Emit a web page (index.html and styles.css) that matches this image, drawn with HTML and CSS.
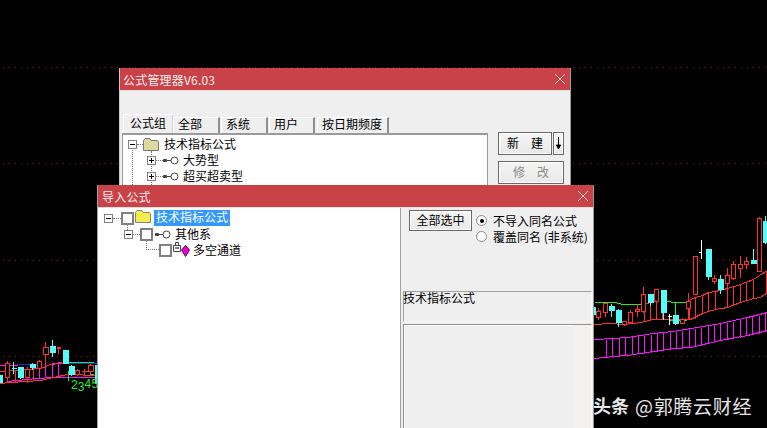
FILE: index.html
```html
<!DOCTYPE html>
<html lang="zh">
<head>
    <meta charset="UTF-8">
    <title>公式管理器</title>
    <link rel="stylesheet" href="styles.css">
</head>
<body>
    <!-- K线背景 -->
    <svg class="chart" width="767" height="428" viewBox="0 0 767 428">
        <g class="grid">
            <path d="M3 67H767M3 163H767M3 260H767M3 356H767"/>
        </g>
        <g transform="translate(.5 .5)" fill="none">
            <!-- 左边 -->
            <path class="magenta" d="M0 365L37 364M53 363L62 362M7 381L37 378L53 377L97 377M39 362V377M45 362V377M52 362V377M58 362V377"/>
            <path class="blue" d="M17 364H40M68 363H97"/>
            <path class="green" d="M62 362H93M68 370V380M90 374L97 375"/>
            <path class="red" d="M0 383L10 382L40 380L53 377L67 374L97 375M0 371L20 370L43 367L50 364L67 362M15 370V382M27 369V381M33 368V380"/>
            <path class="red" d="M7 360V380M27 366V382M39 359V370M45 341V362M58 346V353M56 347H60M56 348H60M77 368V375M84 368V375M81 371H87M90 363V373"/>
            <path class="cyan" d="M13 361V373M11 368H16M20 366V378M32 362V369M52 339V356M71 364V375"/>
            <g class="body-red">
                <rect x="5" y="363" width="4" height="14"/><rect x="25" y="369" width="4" height="8"/>
                <rect x="37" y="361" width="4" height="7"/><rect x="43" y="347" width="5" height="7"/>
                <rect x="75" y="370" width="4" height="4"/><rect x="88" y="365" width="5" height="6"/>
            </g>
            <g class="body-cyan">
                <rect x="-1" y="375" width="3" height="7"/><rect x="18" y="367" width="5" height="10"/>
                <rect x="30" y="364" width="5" height="3"/><rect x="50" y="346" width="5" height="6"/>
                <rect x="63" y="350" width="5" height="13"/><rect x="69" y="366" width="5" height="8"/>
                <rect x="95" y="365" width="5" height="18"/>
            </g>

            <!-- 右边 -->
            <path class="magenta" d="M594 339L613 338L627 337L653 333L673 331L690 328L703 326L720 323L747 317L767 312M594 358L613 356L627 355L653 351L673 348L690 347L703 344L720 340L747 335L767 330"/>
            <path class="magenta" d="M606 339V357M612 338V356M619 338V356M625 337V355M632 336V354M638 335V353M644 335V353M651 334V352M657 333V351M663 332V350M670 331V349M676 331V348M682 330V348M689 328V347M695 328V346M701 327V345M708 325V343M714 324V341M720 323V340M727 322V339M733 321V338M740 319V337M746 317V335M752 316V334M759 315V333M765 313V331"/>
            <path class="green" d="M594 302H615L622 304H637L643 304M663 300L673 302H685M675 302V320M669 320H686"/>
            <path class="red" d="M594 324L610 323L623 324L633 323L640 322L653 319H690L702 313L708 311L715 309L727 307L740 302L753 298L760 297L767 292M643 304L658 300M688 300L695 297L702 295L708 292L715 291L727 288L740 284L753 279L759 275L767 270"/>
            <path class="red" d="M644 304V321M650 302V320M656 301V319M662 300V319M689 300V319M695 297V318M702 295V313M708 292V311M715 291V309M727 288V307M733 286V305M740 284V302M746 282V300M753 279V298M766 271V293"/>
            <path class="red" d="M598 307V319M605 303V316M624 321V325M630 309V322M637 303V316M643 286V312M656 289V301M682 317V323M688 292V319M714 274V283M727 267V288M733 260V279M740 255V277M746 256V268M759 216V271"/>
            <path class="cyan" d="M611 303V316M618 308V326M650 300V305M663 310V319M675 322V324M708 275V279M720 274V293M753 248V260M765 215V243"/>
            <path class="white" d="M669 313V324M667 316H671M701 239V258M698 252H701"/>
            <g class="body-red">
                <rect x="596" y="311" width="4" height="6"/><rect x="603" y="303" width="4" height="9"/>
                <rect x="622" y="321" width="4" height="3"/><rect x="628" y="312" width="4" height="10"/>
                <rect x="635" y="309" width="4" height="2"/><rect x="641" y="294" width="4" height="17"/>
                <rect x="654" y="289" width="4" height="12"/><rect x="680" y="319" width="4" height="4"/>
                <rect x="686" y="301" width="4" height="7"/><rect x="693" y="256" width="4" height="38"/>
                <rect x="712" y="278" width="4" height="3"/><rect x="725" y="275" width="4" height="8"/>
                <rect x="731" y="264" width="4" height="14"/><rect x="738" y="264" width="4" height="4"/>
                <rect x="744" y="261" width="4" height="3"/><rect x="757" y="218" width="4" height="53"/>
            </g>
            <g class="body-cyan">
                <rect x="593" y="307" width="2" height="7"/><rect x="609" y="306" width="5" height="4"/>
                <rect x="616" y="310" width="5" height="12"/><rect x="648" y="294" width="5" height="8"/>
                <rect x="661" y="290" width="5" height="22"/><rect x="673" y="315" width="5" height="8"/>
                <rect x="706" y="249" width="5" height="27"/><rect x="718" y="279" width="5" height="10"/>
                <rect x="751" y="260" width="5" height="3"/><rect x="763" y="221" width="5" height="21"/>
            </g>
        </g>
        <text class="wave"><tspan x="71" y="389">2</tspan><tspan x="77.8" y="391">3</tspan><tspan x="84.6" y="388">4</tspan><tspan x="91.4" y="388">5</tspan></text>
    </svg>

    <div class="watermark"><b>头条</b><span>@郭腾云财经</span></div>

    <!-- 公式管理器 -->
    <div class="window manager">
        <div class="titlebar">
            <span>公式管理器V6.03</span>
            <svg class="close" width="10" height="10" viewBox="0 0 10 10"><path d="M0 0L10 10M10 0L0 10"/></svg>
        </div>
        <div class="manager-body">
            <div class="manager-left">
                <div class="tabs">
                    <div class="tab active">公式组</div>
                    <div class="tab tab-qb">全部</div>
                    <div class="tab tab-xt">系统</div>
                    <div class="tab tab-yh">用户</div>
                    <div class="tab tab-date">按日期频度</div>
                </div>
                <div class="tree-pane">
                    <div class="tree-row first">
                        <span class="toggle minus"></span><span class="dots"></span>
                        <svg class="folder" width="16" height="13" viewBox="0 0 16 13"><path class="folder-shape" d="M.5 12.5V2.5L2 .5H7L8 2.5H14.5L15.5 4V12.5Z"/></svg>
                        <span class="label">技术指标公式</span>
                    </div>
                    <div class="tree-row level1">
                        <span class="toggle plus"></span><span class="dots"></span>
                        <svg class="key" width="16" height="9" viewBox="0 0 16 9"><path class="key-bar" d="M.5 3.5H3.5V5.5H.5Z"/><path d="M3.5 4.5H8"/><circle cx="11.5" cy="4.5" r="3.5"/></svg>
                        <span class="label">大势型</span>
                    </div>
                    <div class="tree-row level1">
                        <span class="toggle plus"></span><span class="dots"></span>
                        <svg class="key" width="16" height="9" viewBox="0 0 16 9"><path class="key-bar" d="M.5 3.5H3.5V5.5H.5Z"/><path d="M3.5 4.5H8"/><circle cx="11.5" cy="4.5" r="3.5"/></svg>
                        <span class="label">超买超卖型</span>
                    </div>
                </div>
            </div>
            <div class="manager-right">
                <div class="btn-line">
                    <button class="btn btn-new">新　建</button>
                    <button class="btn btn-arrow">
                        <svg width="7" height="13" viewBox="0 0 7 13"><path d="M3.5 0V12M1.5 8H5.5L3.5 12Z"/></svg>
                    </button>
                </div>
                <button class="btn btn-edit">修　改</button>
            </div>
        </div>
    </div>

    <!-- 导入公式 -->
    <div class="window importer">
        <div class="titlebar">
            <span>导入公式</span>
            <svg class="close" width="10" height="10" viewBox="0 0 10 10"><path d="M0 0L10 10M10 0L0 10"/></svg>
        </div>
        <div class="importer-body">
            <div class="import-tree">
                <div class="import-row">
                    <span class="toggle minus"></span><span class="dots"></span>
                    <span class="check"></span>
                    <svg class="folder" width="16" height="13" viewBox="0 0 16 13"><path class="folder-shape" d="M.5 12.5V2.5L2 .5H7L8 2.5H14.5L15.5 4V12.5Z"/></svg>
                    <span class="label selected">技术指标公式</span>
                </div>
                <div class="import-row level1">
                    <span class="toggle minus"></span><span class="dots"></span>
                    <span class="check"></span>
                    <svg class="key" width="16" height="9" viewBox="0 0 16 9"><path class="key-bar" d="M.5 3.5H3.5V5.5H.5Z"/><path d="M3.5 4.5H8"/><circle cx="11.5" cy="4.5" r="3.5"/></svg>
                    <span class="label">其他系</span>
                </div>
                <div class="import-row level2">
                    <span class="elbow"></span>
                    <span class="check"></span>
                    <svg class="lock" width="18" height="16" viewBox="0 0 18 16">
                        <path class="lock-body" d="M.5 3.5H7.5V9.5H.5Z"/>
                        <path class="lock-hook" d="M2.5 3V.5H5.5V3"/>
                        <path class="lock-key" d="M2 6H6"/>
                        <path class="gem" d="M12.5 3.5L16.5 8L12.5 14.5L8.5 8Z"/>
                    </svg>
                    <span class="label">多空通道</span>
                </div>
            </div>
            <div class="import-side">
                <div class="side-top">
                    <button class="btn btn-all">全部选中</button>
                    <div class="radios">
                        <div class="radio-row"><span class="radio on"></span>不导入同名公式</div>
                        <div class="radio-row"><span class="radio"></span>覆盖同名 (非系统)</div>
                    </div>
                </div>
                <div class="desc">技术指标公式</div>
                <div class="preview"><div class="preview-strip"></div></div>
            </div>
        </div>
    </div>
</body>
</html>
```

FILE: styles.css
```css
html, body {
    margin: 0;
    height: 428px;
    overflow: hidden;
    background-color: #000;
}

body {
    position: relative;
    width: 767px;
    font-family: "Noto Sans CJK SC", "Liberation Sans", sans-serif;
    font-size: 12px;
    color: #000;
}

/* chart */
.chart {
    position: absolute;
    left: 0;
    top: 0;
    shape-rendering: crispEdges;
}

.grid path {
    fill: none;
    stroke: #861a1a;
    stroke-width: 1;
    stroke-dasharray: 1 5;
}

.magenta { stroke: #ff10ff; }
.blue { stroke: #2020f0; }
.green { stroke: #20f020; }
.red { stroke: #ff3030; }
.cyan { stroke: #54fcfc; }
.white { stroke: #fff; }

.body-red rect {
    fill: #000;
    stroke: #ff3030;
}

.body-cyan rect {
    fill: #54fcfc;
    stroke: #54fcfc;
}

.wave {
    font-family: "Liberation Sans", sans-serif;
    font-size: 12px;
    fill: #2ce82c;
    shape-rendering: auto;
}

.watermark {
    position: absolute;
    left: 593px;
    top: 393px;
    display: flex;
    align-items: center;
    height: 24px;
    color: #e6e6e6;
    white-space: nowrap;
}

.watermark b {
    font-size: 18px;
    font-weight: 700;
}

.watermark span {
    margin-left: 6px;
    font-size: 19px;
    letter-spacing: 0.7px;
}

/* windows */
.window {
    position: absolute;
    background-color: #efefef;
    box-sizing: border-box;
    border-right: 1px solid #9a9a9a;
}

.manager {
    left: 119px;
    top: 68px;
    width: 452px;
    height: 240px;
    border-left: 1px solid #c8c8c8;
}

.importer {
    left: 97px;
    top: 185px;
    width: 497px;
    height: 260px;
    border-left: 1px solid #a0a0a0;
}

.titlebar {
    height: 22px;
    padding: 0 5px 0 4px;
    display: flex;
    align-items: center;
    justify-content: space-between;
    background-color: #c94248;
    color: #fbeeee;
    font-size: 12px;
    letter-spacing: 0.2px;
    border-bottom: 1px solid #e0e0e0;
}

.manager .titlebar {
    padding-left: 3px;
}

.close path {
    stroke: #f3cfd0;
    stroke-width: 1;
    fill: none;
}

.close {
    flex: none;
}

/* manager */
.manager-body {
    display: flex;
    padding: 22px 0 0 2px;
}

.manager-left {
    width: 366px;
}

.tabs {
    display: flex;
    align-items: flex-end;
    height: 20px;
    padding-left: 1px;
}

.tab {
    box-sizing: border-box;
    height: 16px;
    line-height: 12px;
    padding-left: 4px;
    border-top: 1px solid #fff;
    border-left: 1px solid #fff;
    border-right: 2px solid #8e8e8e;
}

.tab.active {
    width: 50px;
    height: 19px;
    line-height: 16px;
    padding-left: 6px;
    border-right: 1px solid #d0d0d0;
}

.tab-qb { width: 47px; }
.tab-xt { width: 47px; margin-left: 1px; }
.tab-yh { width: 46px; margin-left: 1px; }
.tab-date { width: 72px; margin-left: 2px; }

.tree-pane {
    height: 180px;
    background-color: #fff;
    border-top: 2px solid #9a9a9a;
    border-left: 1px solid #9a9a9a;
    border-right: 1px solid #9a9a9a;
    padding: 1px 0 0 5px;
    position: relative;
}

/* dotted tree lines */
.tree-pane::before {
    content: "";
    position: absolute;
    left: 9px;
    top: 12px;
    height: 60px;
    border-left: 1px dotted #777;
}

.tree-pane::after {
    content: "";
    position: absolute;
    left: 28px;
    top: 16px;
    height: 60px;
    border-left: 1px dotted #777;
}

.tree-row {
    display: flex;
    align-items: center;
    height: 16px;
    position: relative;
}

.tree-row.level1 {
    padding-left: 19px;
}

.tree-row .label {
    margin-left: 5px;
    padding-bottom: 2px;
}

.tree-row.first .dots {
    width: 6px;
}

.tree-row.level1 .dots {
    width: 7px;
}

.tree-row.level1 .label {
    margin-left: 4px;
}

.tree-row .folder-shape {
    fill: #dcd9a0;
    stroke: #777;
}

.toggle {
    position: relative;
    box-sizing: border-box;
    flex: none;
    width: 9px;
    height: 9px;
    background-color: #fff;
    border: 1px solid #808080;
    z-index: 1;
}

.toggle::before {
    content: "";
    position: absolute;
    left: 1px;
    top: 3px;
    width: 5px;
    height: 1px;
    background-color: #000;
}

.toggle.plus::after {
    content: "";
    position: absolute;
    left: 3px;
    top: 1px;
    width: 1px;
    height: 5px;
    background-color: #000;
}

.dots {
    flex: none;
    width: 8px;
    border-top: 1px dotted #777;
}

.folder, .key, .lock {
    flex: none;
}

.folder-shape {
    fill: #f5ec50;
    stroke: #85857a;
    stroke-width: 1;
}

.key path, .key circle {
    fill: none;
    stroke: #444;
    stroke-width: 1;
}

.key .key-bar {
    fill: #444;
}

/* buttons */
.btn {
    box-sizing: border-box;
    margin: 0;
    padding: 0 0 2px;
    font-family: inherit;
    font-size: 12px;
    color: #000;
    background: linear-gradient(#f4f4f4, #e9e9e9);
    border: 1px solid #6a6a66;
    box-shadow: inset 0 0 0 1px #fff;
}

.manager-right {
    margin-left: 10px;
    padding-top: 19px;
}

.btn-line {
    display: flex;
    gap: 1px;
    margin-bottom: 6px;
}

.btn-new {
    width: 54px;
    height: 23px;
}

.btn-arrow {
    width: 11px;
    height: 23px;
    padding: 0;
    display: flex;
    align-items: center;
    justify-content: center;
}

.btn-arrow path {
    stroke: #000;
    fill: #000;
    stroke-width: 1;
}

.btn-edit {
    display: block;
    width: 66px;
    height: 23px;
    color: #8a8a8a;
}

/* importer */
.importer-body {
    display: flex;
    height: 238px;
}

.import-tree {
    position: relative;
    box-sizing: border-box;
    width: 304px;
    height: 100%;
    margin-left: -1px;
    padding: 2px 0 0 6px;
    background-color: #fff;
    border-left: 1px solid #a0a0a0;
    border-right: 1px solid #a0a0a0;
}

.import-tree::before {
    content: "";
    position: absolute;
    left: 29px;
    top: 17px;
    height: 5px;
    border-left: 1px dotted #777;
}

.import-row {
    display: flex;
    align-items: center;
    height: 16px;
}

.import-row.level1 {
    padding-left: 20px;
}

.import-row.level1 .dots {
    width: 7px;
}

.import-row.level2 {
    padding-left: 42px;
}

.import-row .folder {
    margin-left: 1px;
    margin-top: -3px;
}

.import-row .key {
    margin-left: 2px;
}

.import-row .label {
    margin-left: 4px;
    padding-bottom: 2px;
}

.import-row .selected {
    box-sizing: border-box;
    margin-left: 3px;
    padding: 0 2px;
    height: 16px;
    line-height: 14px;
    background-color: #3399ff;
    color: #fff;
}

.import-row.level2 .label {
    margin-left: 2px;
}

.check {
    flex: none;
    box-sizing: border-box;
    width: 13px;
    height: 13px;
    background-color: #fff;
    border: 2px solid #808080;
}

.elbow {
    flex: none;
    width: 13px;
    height: 9px;
    margin-top: -9px;
    box-sizing: border-box;
    border-left: 1px dotted #777;
    border-bottom: 1px dotted #777;
}

.lock {
    margin-left: 1px;
}

.lock-body {
    fill: #fff;
    stroke: #444;
}

.lock-hook {
    fill: none;
    stroke: #444;
}

.lock-key {
    stroke: #000;
}

.gem {
    fill: #ee00cc;
    stroke: #600060;
}

.import-side {
    flex: 1;
    padding-left: 2px;
}

.side-top {
    display: flex;
    height: 83px;
    padding: 2px 0 0 6px;
    box-sizing: border-box;
}

.btn-all {
    flex: none;
    width: 63px;
    height: 21px;
}

.radios {
    margin-left: 4px;
    padding-top: 2px;
}

.radio-row {
    display: flex;
    align-items: center;
    height: 16px;
    white-space: nowrap;
}

.radio {
    position: relative;
    flex: none;
    box-sizing: border-box;
    width: 11px;
    height: 11px;
    margin-right: 6px;
    background-color: #fff;
    border: 1px solid #8a8a8a;
    border-radius: 50%;
}

.radio.on::after {
    content: "";
    position: absolute;
    left: 3px;
    top: 3px;
    width: 4px;
    height: 4px;
    border-radius: 50%;
    background-color: #000;
}

.desc {
    box-sizing: border-box;
    width: 189px;
    height: 31px;
    line-height: 11px;
    text-indent: -1px;
    border-top: 1px solid #a0a0a0;
    border-left: 1px solid #a0a0a0;
    border-right: 1px solid #f8f8f8;
    border-bottom: 1px solid #f8f8f8;
}

.preview {
    box-sizing: border-box;
    display: flex;
    justify-content: flex-end;
    width: 189px;
    height: 120px;
    margin-top: 2px;
    border-top: 1px solid #909090;
    border-left: 1px solid #909090;
    border-right: 1px solid #f8f8f8;
    box-shadow: inset 1px 1px 0 #fff;
}

.preview-strip {
    width: 18px;
    background-color: #f3f2f0;
}
```
